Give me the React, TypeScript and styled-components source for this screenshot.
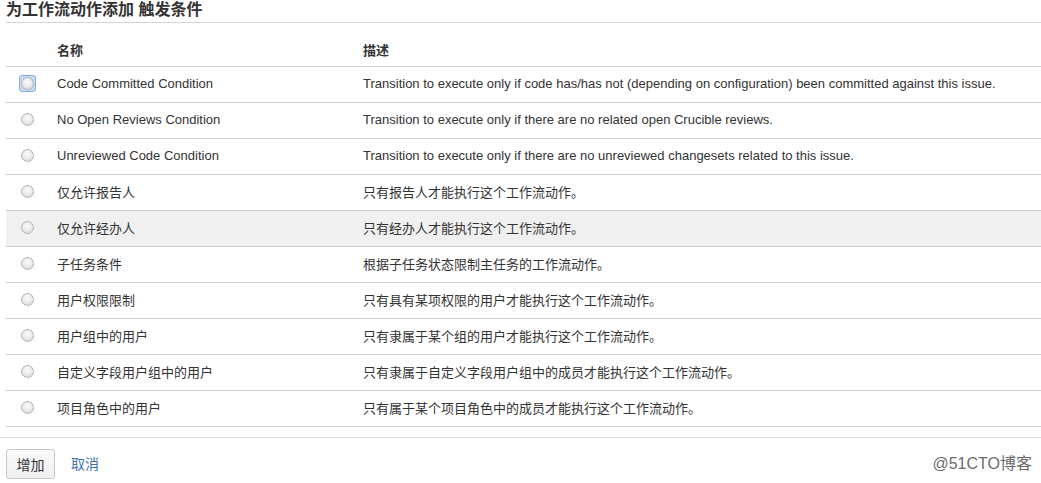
import React from "react";
import styled, { createGlobalStyle } from "styled-components";

const Global = createGlobalStyle`
  html, body { margin: 0; padding: 0; background: #fff; }
  body {
    font-family: Arial, "Liberation Sans", "Noto Sans CJK SC", sans-serif;
    font-size: 13px;
    color: #333;
  }
`;

const Page = styled.div`
  width: 1041px;
  height: 483px;
  overflow: hidden;
  padding-left: 6px;
  box-sizing: border-box;
`;

const Title = styled.h2`
  margin: 0;
  height: 23px;
  line-height: 20px;
  font-size: 16px;
  font-weight: bold;
  color: #333;
  border-bottom: 1px solid #d5d5d5;
  box-sizing: border-box;
`;

const Table = styled.div`
  display: grid;
  grid-template-columns: 51px 306px 1fr;
`;

const Row = styled.div<{ $head?: boolean; $hl?: boolean }>`
  display: contents;
  & > div {
    height: ${(p) => (p.$head ? "44px" : "36px")};
    border-bottom: 1px solid #cfcfcf;
    background: ${(p) => (p.$hl ? "#f0f0f0" : "transparent")};
    font-weight: ${(p) => (p.$head ? "bold" : "normal")};
    padding-top: ${(p) => (p.$head ? "10px" : "0")};
    padding-bottom: ${(p) => (p.$head ? "0" : "2px")};
  }
`;

const Cell = styled.div`
  display: flex;
  align-items: center;
  box-sizing: border-box;
  white-space: nowrap;
`;

const RadioCell = styled(Cell)`
  padding-left: 13px;
`;

const FocusRing = styled.span<{ $focus?: boolean }>`
  display: inline-flex;
  align-items: center;
  justify-content: center;
  width: 17px;
  height: 17px;
  box-sizing: border-box;
  border-radius: 3px;
  border: 1px solid ${(p) => (p.$focus ? "#86aee6" : "transparent")};
  background: ${(p) => (p.$focus ? "#c9dbf3" : "transparent")};
`;

const Radio = styled.span`
  display: inline-block;
  width: 13px;
  height: 13px;
  border-radius: 50%;
  box-sizing: border-box;
  border: 1px solid #b4b4b4;
  background: radial-gradient(circle at 50% 35%, #fbfbfb 0%, #e6e6e6 60%, #d2d2d2 100%);
`;

const Footer = styled.div`
  margin-top: 10px;
  margin-left: -6px;
  padding: 11px 9px 0 6px;
  border-top: 1px solid #dedede;
  display: flex;
  align-items: flex-start;
  height: 46px;
  box-sizing: border-box;
`;

const Button = styled.button`
  height: 30px;
  width: 49px;
  border: 1px solid #c7c7c7;
  border-radius: 3px;
  background: linear-gradient(#fafafa, #f0f0f0);
  font-family: Arial, "Liberation Sans", "Noto Sans CJK SC", sans-serif;
  font-size: 14px;
  color: #333;
  padding: 0;
`;

const Link = styled.a`
  margin-left: 16px;
  line-height: 30px;
  color: #3b73af;
  font-size: 14px;
  text-decoration: none;
`;

const Watermark = styled.span`
  margin-left: auto;
  line-height: 30px;
  color: #6a6a6a;
  font-size: 16px;
  font-family: Arial, "Liberation Sans", "Noto Sans CJK SC", sans-serif;
`;

const rows: [string, string][] = [
  ["Code Committed Condition", "Transition to execute only if code has/has not (depending on configuration) been committed against this issue."],
  ["No Open Reviews Condition", "Transition to execute only if there are no related open Crucible reviews."],
  ["Unreviewed Code Condition", "Transition to execute only if there are no unreviewed changesets related to this issue."],
  ["仅允许报告人", "只有报告人才能执行这个工作流动作。"],
  ["仅允许经办人", "只有经办人才能执行这个工作流动作。"],
  ["子任务条件", "根据子任务状态限制主任务的工作流动作。"],
  ["用户权限限制", "只有具有某项权限的用户才能执行这个工作流动作。"],
  ["用户组中的用户", "只有隶属于某个组的用户才能执行这个工作流动作。"],
  ["自定义字段用户组中的用户", "只有隶属于自定义字段用户组中的成员才能执行这个工作流动作。"],
  ["项目角色中的用户", "只有属于某个项目角色中的成员才能执行这个工作流动作。"],
];

export default function App() {
  return (
    <Page>
      <Global />
      <Title>为工作流动作添加 触发条件</Title>
      <Table>
        <Row $head>
          <Cell />
          <Cell>名称</Cell>
          <Cell>描述</Cell>
        </Row>
        {rows.map(([name, desc], i) => (
          <Row key={name} $hl={i === 4}>
            <RadioCell>
              <FocusRing $focus={i === 0}>
                <Radio />
              </FocusRing>
            </RadioCell>
            <Cell>{name}</Cell>
            <Cell>{desc}</Cell>
          </Row>
        ))}
      </Table>
      <Footer>
        <Button>增加</Button>
        <Link href="#">取消</Link>
        <Watermark>@51CTO博客</Watermark>
      </Footer>
    </Page>
  );
}
